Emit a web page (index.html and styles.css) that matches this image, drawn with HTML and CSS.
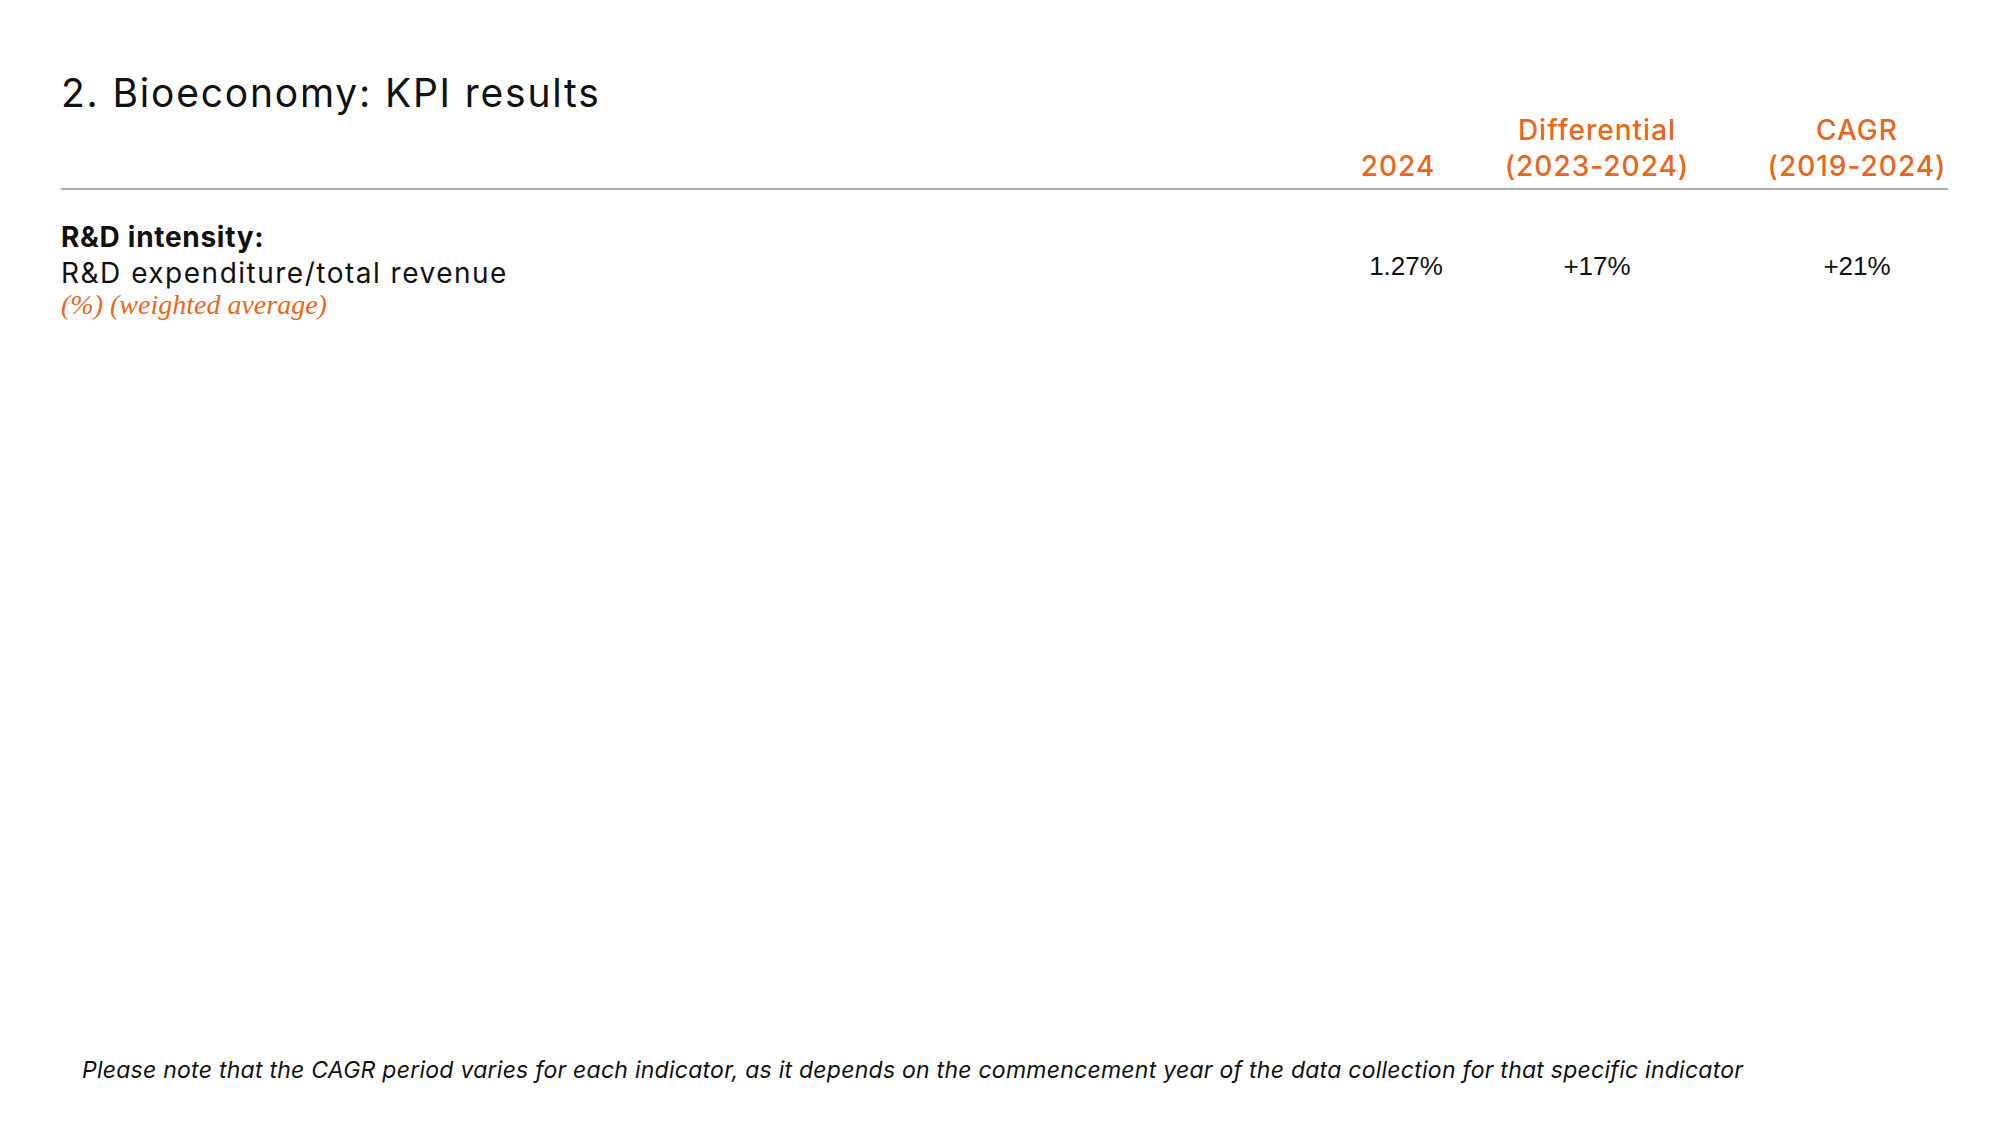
FILE: index.html
```html
<!DOCTYPE html>
<html lang="en">
<head>
<meta charset="utf-8">
<title>2. Bioeconomy: KPI results</title>
<link rel="stylesheet" href="styles.css">
</head>
<body>
<div class="page">
  <h1 class="title">2. Bioeconomy: KPI results</h1>
  <div class="table">
    <div class="grid head">
      <div class="cell"></div>
      <div class="cell c2">2024</div>
      <div class="cell c3">Differential<br>(2023-2024)</div>
      <div class="cell c4">CAGR<br>(2019-2024)</div>
    </div>
    <div class="grid row">
      <div class="cell label">
        <div class="l-bold">R&amp;D intensity:</div>
        <div class="l-main">R&amp;D expenditure/total revenue</div>
        <div class="l-unit">(%) (weighted average)</div>
      </div>
      <div class="cell c2 val val-first">1.27%</div>
      <div class="cell c3 val">+17%</div>
      <div class="cell c4 val">+21%</div>
    </div>
  </div>
  <p class="note">Please note that the CAGR period varies for each indicator, as it depends on the commencement year of the data collection for that specific indicator</p>
</div>
</body>
</html>
```
FILE: styles.css
```css
html, body {
  margin: 0;
  padding: 0;
  background: #ffffff;
}
.page {
  width: 2000px;
  height: 1125px;
  box-sizing: border-box;
  padding: 73px 52px 40px 61px;
  display: flex;
  flex-direction: column;
  font-family: "Inter", "Liberation Sans", sans-serif;
  color: #111111;
}
.title {
  margin: 0;
  font-size: 39px;
  line-height: 39px;
  font-weight: 400;
  letter-spacing: 1.8px;
  color: #111111;
}
.grid {
  display: grid;
  grid-template-columns: 1fr 120px 238px 212px;
  column-gap: 20px;
}
.head {
  align-items: end;
  padding-bottom: 4px;
  border-bottom: 2px solid #ababab;
  font-size: 28px;
  line-height: 36px;
  font-weight: 500;
  letter-spacing: 1px;
  color: #e9671d;
  text-align: center;
}
.c4 {
  padding-left: 30px;
}
.cell {
  text-align: center;
  white-space: nowrap;
}
.row {
  padding-top: 29px;
  align-items: start;
}
.label {
  text-align: left;
  font-size: 28px;
  line-height: 36px;
}
.l-bold {
  font-weight: 700;
  letter-spacing: 0.7px;
}
.l-main {
  letter-spacing: 1.5px;
}
.l-unit {
  font-family: "Liberation Serif", "DejaVu Serif", serif;
  font-style: italic;
  line-height: 28px;
  color: #e9671d;
}
.val {
  margin-top: 29px;
  font-family: "Liberation Sans", Arial, sans-serif;
  font-size: 26px;
  line-height: 36px;
  color: #111111;
}
.val-first {
  padding-left: 16px;
}
.note {
  margin: auto 0 0 21px;
  font-size: 23px;
  line-height: 30px;
  font-style: italic;
  letter-spacing: 0.25px;
  color: #111111;
}
```
